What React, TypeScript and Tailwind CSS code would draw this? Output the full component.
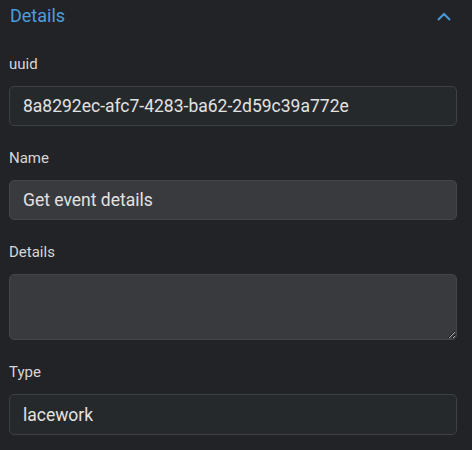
import { useState } from "react";

const Field = ({ label, children }: { label: string; children: React.ReactNode }) => (
  <div className="flex flex-col">
    <label className="text-[15px] leading-5 text-[#d6d6d6]">{label}</label>
    <div className="mt-3">{children}</div>
  </div>
);

export default function App() {
  const [name, setName] = useState("Get event details");
  const [details, setDetails] = useState("");

  return (
    <div
      className="h-[450px] w-[472px] overflow-hidden bg-[#222327] pl-[9px] pr-[15px] [color-scheme:dark]"
      style={{ fontFamily: "Roboto, 'Liberation Sans', sans-serif" }}
    >
      <div className="mt-1 flex h-6 items-center justify-between pl-[1px]">
        <h2 className="text-[18px] leading-6 text-[#4c9edc]">Details</h2>
        <svg width="14" height="9" viewBox="0 0 14 9" className="mr-[6px] mt-[1px]">
          <polyline points="1,8 7,2 13,8" fill="none" stroke="#4a9ad6" strokeWidth="2" />
        </svg>
      </div>

      <div className="mt-[26px] flex flex-col gap-[22px]">
        <Field label="uuid">
          <input
            readOnly
            value="8a8292ec-afc7-4283-ba62-2d59c39a772e"
            className="h-10 w-full rounded-[5px] border border-[#3e4044] bg-[#26292c] pl-[13px] text-[17.5px] text-[#e2e2e2] outline-none"
          />
        </Field>
        <Field label="Name">
          <input
            value={name}
            onChange={(e) => setName(e.target.value)}
            className="h-10 w-full rounded-[5px] border border-[#45464a] bg-[#393a3e] pl-[13px] text-[17.5px] text-[#e2e2e2] outline-none"
          />
        </Field>
        <Field label="Details">
          <textarea
            value={details}
            onChange={(e) => setDetails(e.target.value)}
            className="block h-[66px] w-full rounded-[5px] border border-[#45464a] bg-[#393a3e] px-[13px] py-2 text-[17.5px] text-[#e2e2e2] outline-none"
          />
        </Field>
        <Field label="Type">
          <input
            readOnly
            value="lacework"
            className="h-[41px] w-full rounded-[5px] border border-[#3e4044] bg-[#26292c] pl-[13px] text-[17.5px] text-[#e2e2e2] outline-none"
          />
        </Field>
      </div>
    </div>
  );
}
